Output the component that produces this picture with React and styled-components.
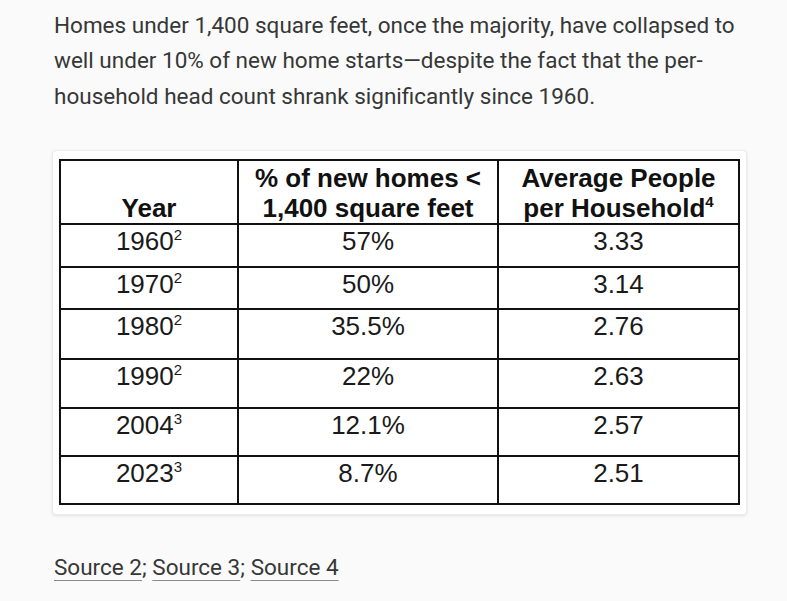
import React from "react";
import styled, { createGlobalStyle } from "styled-components";

const GlobalStyle = createGlobalStyle`
  html, body {
    margin: 0;
    padding: 0;
    background: #fafafa;
  }
`;

const Page = styled.main`
  width: 700px;
  padding: 8px 0 0 54px;
  font-family: Roboto, "Noto Sans", sans-serif;
  color: #363737;
`;

const Lead = styled.p`
  margin: 0;
  font-size: 22.5px;
  line-height: 35.3px;
`;

const Card = styled.figure`
  margin: 36px 0 0 -2px;
  width: 695px;
  box-sizing: border-box;
  padding: 8px 8px 9px 6px;
  background: #fff;
  border: 1px solid #ececec;
  border-radius: 4px;
  box-shadow: 0 1px 3px rgba(0, 0, 0, 0.1);
`;

const Table = styled.table`
  border-collapse: collapse;
  table-layout: fixed;
  width: 679px;
  font-family: "Liberation Sans", Arial, sans-serif;
  font-size: 26px;
  color: #1a1a1a;
  text-align: center;
`;

const Head = styled.th`
  border: 2px solid #111;
  height: 62px;
  padding: 0 4px;
  vertical-align: bottom;
  font-weight: 700;
  line-height: 30px;
  color: #111;
`;

const Cell = styled.td`
  border: 2px solid #111;
  height: ${(props) => props.h}px;
  padding: 1px 4px 0;
  vertical-align: top;
  line-height: 30px;
`;

const Sup = styled.sup`
  font-size: 15px;
  line-height: 0;
  vertical-align: 10px;
`;

const Sources = styled.p`
  margin: 37px 0 0;
  font-size: 22.5px;
  line-height: 30px;
`;

const SourceLink = styled.a`
  color: #363737;
  text-decoration: underline;
  text-decoration-color: #8a8a8a;
  text-decoration-thickness: 1px;
  text-underline-offset: 5px;
`;

const rows = [
  { year: "1960", note: "2", share: "57%", people: "3.33", h: 40 },
  { year: "1970", note: "2", share: "50%", people: "3.14", h: 39 },
  { year: "1980", note: "2", share: "35.5%", people: "2.76", h: 47 },
  { year: "1990", note: "2", share: "22%", people: "2.63", h: 46 },
  { year: "2004", note: "3", share: "12.1%", people: "2.57", h: 45 },
  { year: "2023", note: "3", share: "8.7%", people: "2.51", h: 45 },
];

export default function App() {
  return (
    <>
      <GlobalStyle />
      <Page>
        <Lead>
          Homes under 1,400 square feet, once the majority, have collapsed to
          well under 10% of new home starts—despite the fact that the
          per-household head count shrank significantly since 1960.
        </Lead>
        <Card>
          <Table>
            <colgroup>
              <col style={{ width: 178 }} />
              <col style={{ width: 260 }} />
              <col style={{ width: 241 }} />
            </colgroup>
            <thead>
              <tr>
                <Head>Year</Head>
                <Head>
                  % of new homes &lt;
                  <br />
                  1,400 square feet
                </Head>
                <Head>
                  Average People
                  <br />
                  per Household<Sup>4</Sup>
                </Head>
              </tr>
            </thead>
            <tbody>
              {rows.map((r) => (
                <tr key={r.year}>
                  <Cell h={r.h}>
                    {r.year}
                    <Sup>{r.note}</Sup>
                  </Cell>
                  <Cell h={r.h}>{r.share}</Cell>
                  <Cell h={r.h}>{r.people}</Cell>
                </tr>
              ))}
            </tbody>
          </Table>
        </Card>
        <Sources>
          <SourceLink href="#">Source 2</SourceLink>;{" "}
          <SourceLink href="#">Source 3</SourceLink>;{" "}
          <SourceLink href="#">Source 4</SourceLink>
        </Sources>
      </Page>
    </>
  );
}
